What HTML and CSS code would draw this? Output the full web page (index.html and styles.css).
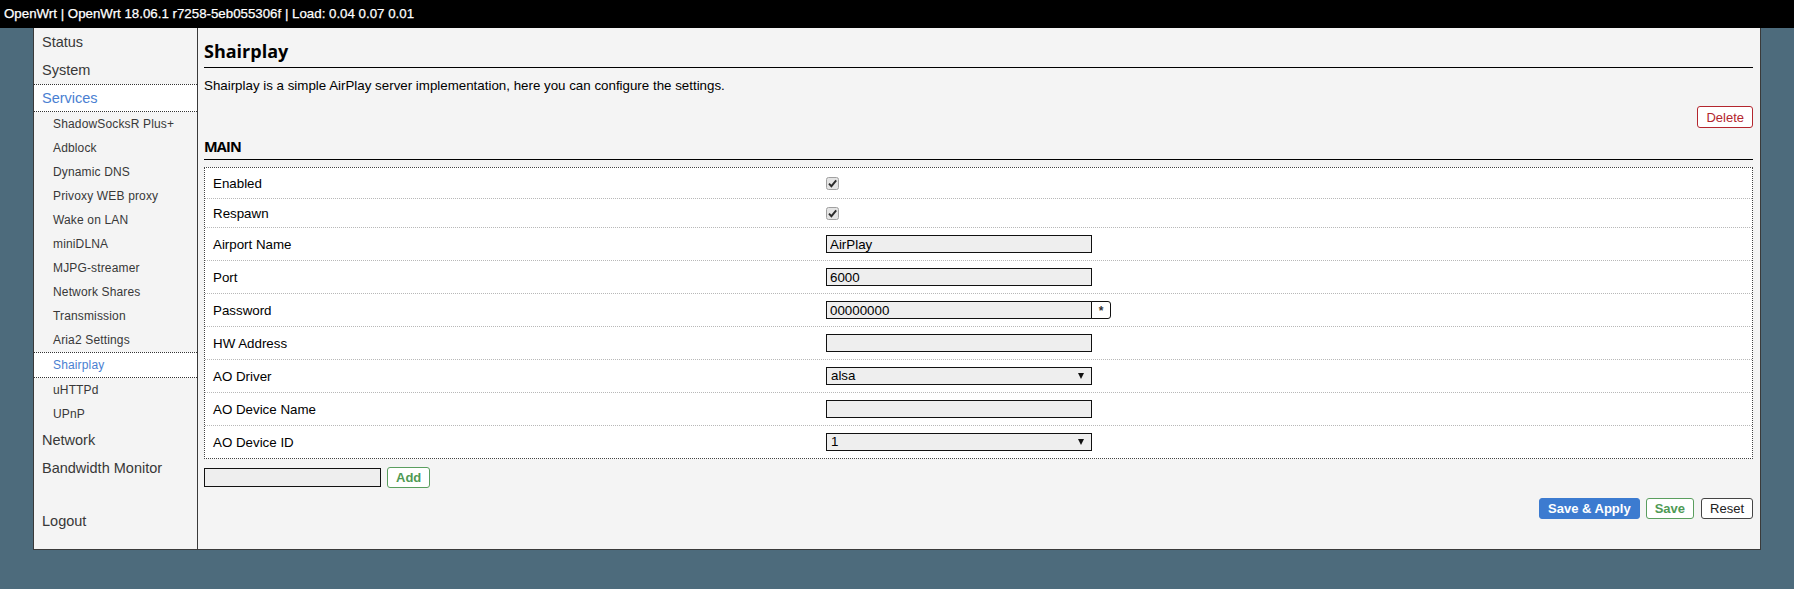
FILE: index.html
```html
<!DOCTYPE html>
<html>
<head>
<meta charset="utf-8">
<title>Shairplay</title>
<link rel="stylesheet" href="styles.css">
</head>
<body>
<header class="topbar">OpenWrt | OpenWrt 18.06.1 r7258-5eb055306f | Load: 0.04 0.07 0.01</header>
<div class="frame">
  <nav class="sidebar">
    <ul class="menu">
      <li class="top">Status</li>
      <li class="top">System</li>
      <li class="top active">Services</li>
      <li class="sub">ShadowSocksR Plus+</li>
      <li class="sub">Adblock</li>
      <li class="sub">Dynamic DNS</li>
      <li class="sub">Privoxy WEB proxy</li>
      <li class="sub">Wake on LAN</li>
      <li class="sub">miniDLNA</li>
      <li class="sub">MJPG-streamer</li>
      <li class="sub">Network Shares</li>
      <li class="sub">Transmission</li>
      <li class="sub">Aria2 Settings</li>
      <li class="sub active">Shairplay</li>
      <li class="sub">uHTTPd</li>
      <li class="sub">UPnP</li>
      <li class="top">Network</li>
      <li class="top">Bandwidth Monitor</li>
      <li class="top logout">Logout</li>
    </ul>
  </nav>
  <main class="content">
    <h2 class="title">Shairplay</h2>
    <p class="desc">Shairplay is a simple AirPlay server implementation, here you can configure the settings.</p>
    <div class="section-actions"><button class="btn btn-delete">Delete</button></div>
    <h3 class="section-title">MAIN</h3>
    <div class="fieldset">
      <div class="row row-check first"><span class="label">Enabled</span><span class="field"><svg class="check" width="13" height="13" viewBox="0 0 13 13"><rect x="0.5" y="0.5" width="12" height="12" rx="2" fill="#e4e4e4" stroke="#a0a0a0"/><path d="M3 6.6 L5.4 9.2 L10.2 3.4" fill="none" stroke="#2a2a2a" stroke-width="1.9"/></svg></span></div>
      <div class="row row-check"><span class="label">Respawn</span><span class="field"><svg class="check" width="13" height="13" viewBox="0 0 13 13"><rect x="0.5" y="0.5" width="12" height="12" rx="2" fill="#e4e4e4" stroke="#a0a0a0"/><path d="M3 6.6 L5.4 9.2 L10.2 3.4" fill="none" stroke="#2a2a2a" stroke-width="1.9"/></svg></span></div>
      <div class="row"><span class="label">Airport Name</span><span class="field"><input class="text" type="text" value="AirPlay"></span></div>
      <div class="row"><span class="label">Port</span><span class="field"><input class="text" type="text" value="6000"></span></div>
      <div class="row"><span class="label">Password</span><span class="field"><input class="text" type="text" value="00000000"><button class="reveal">*</button></span></div>
      <div class="row"><span class="label">HW Address</span><span class="field"><input class="text" type="text" value=""></span></div>
      <div class="row"><span class="label">AO Driver</span><span class="field"><span class="select">alsa</span></span></div>
      <div class="row"><span class="label">AO Device Name</span><span class="field"><input class="text" type="text" value=""></span></div>
      <div class="row"><span class="label">AO Device ID</span><span class="field"><span class="select">1</span></span></div>
    </div>
    <div class="add-row"><input class="text add-input" type="text" value=""><button class="btn btn-add">Add</button></div>
    <div class="actions">
      <button class="btn btn-apply">Save &amp; Apply</button>
      <button class="btn btn-save">Save</button>
      <button class="btn btn-reset">Reset</button>
    </div>
  </main>
</div>
</body>
</html>
```
FILE: styles.css
```css
* { box-sizing: border-box; }
html, body { margin: 0; padding: 0; }
body {
  background: #4d6b7c;
  font-family: "Liberation Sans", Arial, sans-serif;
  color: #000;
  height: 589px;
  overflow: hidden;
}
.topbar {
  height: 28px;
  line-height: 28px;
  background: #000;
  color: #fff;
  font-size: 13.3px;
  padding-left: 4px;
  white-space: nowrap;
  -webkit-text-stroke: 0.25px #fff;
}
.frame {
  display: flex;
  margin: 0 33px;
  height: 522px;
  border: 1px solid #3a3a3a;
  border-top: 0;
  background: #f4f4f4;
}
.sidebar {
  width: 164px;
  flex: none;
  border-right: 1px solid #3a3a3a;
  background: #f4f4f4;
}
.menu { list-style: none; margin: 0; padding: 0; }
.menu .top {
  height: 28px;
  line-height: 28px;
  padding-left: 8px;
  font-size: 14.5px;
  color: #383838;
}
.menu .sub {
  height: 24px;
  line-height: 24px;
  padding-left: 19px;
  font-size: 12px;
  letter-spacing: 0.15px;
  color: #383838;
}
.menu .active {
  background: #fff;
  color: #4a7fd2;
  border-top: 1px dotted #333;
  border-bottom: 1px dotted #333;
}
.menu .top.active { line-height: 26px; }
.menu .sub.active { height: 26px; }
.menu .logout { margin-top: 25px; }

.content {
  flex: 1;
  padding: 10px 7px 0 6px;
  font-size: 13.33px;
}
.title {
  margin: 0;
  font-family: "Open Sans", "Liberation Sans", sans-serif;
  font-weight: 700;
  font-size: 18px;
  line-height: 26px;
  padding-bottom: 3px;
  border-bottom: 1px solid #000;
}
.desc {
  margin: 10px 0 0;
  line-height: 16px;
}
.section-actions {
  display: flex;
  justify-content: flex-end;
  margin-top: 12px;
}
.section-title {
  margin: 9px 0 0;
  font-family: "Open Sans", "Liberation Sans", sans-serif;
  font-weight: 700;
  font-size: 14.5px;
  letter-spacing: -0.8px;
  line-height: 20px;
  padding-bottom: 2px;
  border-bottom: 1px solid #000;
}
.fieldset {
  margin: 7px 0 0 0;
  background: #fff;
  border: 1px dotted #444;
}
.row {
  display: flex;
  align-items: center;
  height: 33px;
  border-top: 1px dotted #b8b8b8;
}
.row-check { height: 29px; }
.row.first { border-top: 0; height: 30px; }
.label {
  flex: none;
  width: 621px;
  padding-left: 8px;
}
.field { display: flex; align-items: center; }
.check { display: block; }
.text {
  width: 266px;
  height: 18px;
  border: 1px solid #111;
  background: #eee;
  font-family: "Liberation Sans", Arial, sans-serif;
  font-size: 13.33px;
  padding: 0 3px;
  margin: 0;
  color: #000;
  outline: none;
}
.reveal {
  width: 20px;
  height: 18px;
  margin: 0 0 0 -1px;
  padding: 0;
  border: 1px solid #111;
  border-radius: 0 3px 3px 0;
  background: #fff;
  font-family: "Liberation Sans", Arial, sans-serif;
  font-size: 12px;
  font-weight: 700;
  line-height: 18px;
  color: #333;
}
.select {
  position: relative;
  display: block;
  width: 266px;
  height: 18px;
  line-height: 16px;
  border: 1px solid #111;
  background: #eee;
  padding: 0 4px;
}
.select::after {
  content: "";
  position: absolute;
  right: 7px;
  top: 5px;
  border-left: 3.5px solid transparent;
  border-right: 3.5px solid transparent;
  border-top: 6px solid #111;
}
.add-row {
  display: flex;
  align-items: center;
  gap: 6px;
  margin-top: 8px;
}
.add-input { width: 177px; height: 19px; }
.btn {
  height: 21px;
  padding: 0 8px;
  border-radius: 3px;
  background: #fff;
  font-family: "Liberation Sans", Arial, sans-serif;
  font-size: 13px;
  line-height: 19px;
  cursor: pointer;
}
.btn-delete { border: 1px solid #b3262e; color: #b3262e; height: 22px; }
.btn-add { border: 1px solid #5a9e5e; color: #4f9a55; font-weight: 700; }
.actions {
  display: flex;
  justify-content: flex-end;
  gap: 6px;
  margin-top: 10px;
}
.btn-apply { border: 1px solid #3c7bd0; background: #3c7bd0; color: #fff; font-weight: 700; }
.btn-save { border: 1px solid #5a9e5e; color: #4f9a55; font-weight: 700; margin-right: 1px; }
.btn-reset { border: 1px solid #444; color: #222; }
```
